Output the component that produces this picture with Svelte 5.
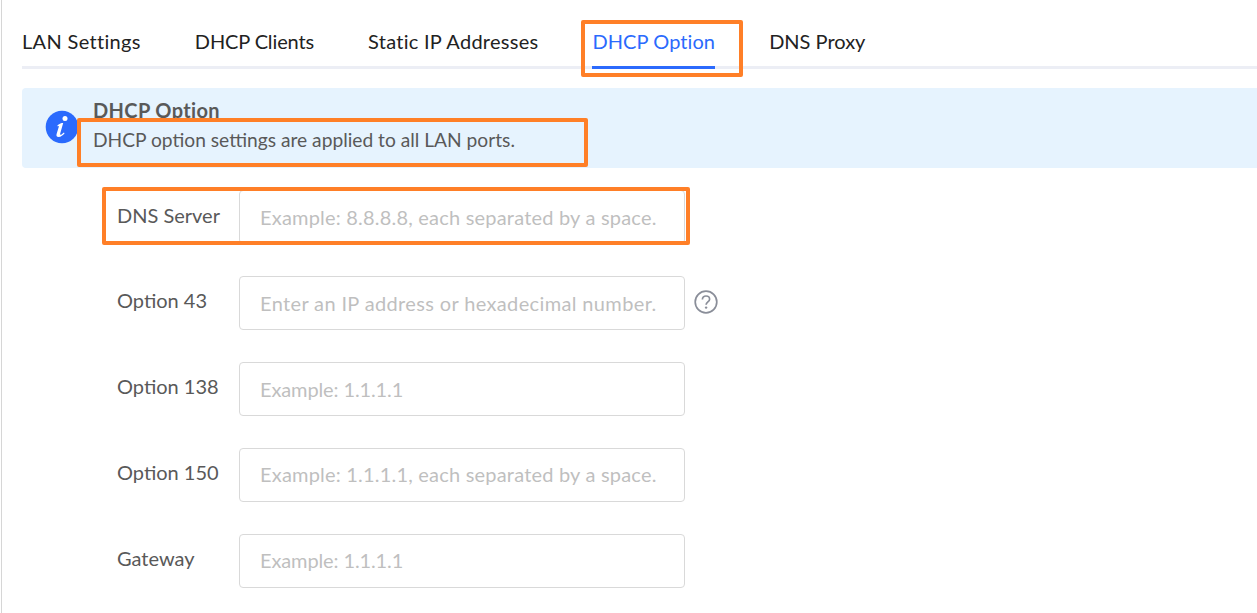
<script>
  const tabs = [
    { name: 'LAN Settings', spacing: 0.33 },
    { name: 'DHCP Clients', spacing: -0.12 },
    { name: 'Static IP Addresses', spacing: 0.27 },
    { name: 'DHCP Option', spacing: 0.08 },
    { name: 'DNS Proxy', spacing: 0 }
  ];
  const fields = [
    { label: 'DNS Server', placeholder: 'Example: 8.8.8.8, each separated by a space.', spacing: 0.2 },
    { label: 'Option 43', placeholder: 'Enter an IP address or hexadecimal number.', spacing: 0.36, help: true },
    { label: 'Option 138', placeholder: 'Example: 1.1.1.1', spacing: -0.12 },
    { label: 'Option 150', placeholder: 'Example: 1.1.1.1, each separated by a space.', spacing: 0.2 },
    { label: 'Gateway', placeholder: 'Example: 1.1.1.1', spacing: -0.12 }
  ];
</script>

<div class="page">
  <nav class="tabs">
    {#each tabs as tab}
      <div class="tab" class:active={tab.name === 'DHCP Option'} style="letter-spacing: {tab.spacing}px">{tab.name}</div>
    {/each}
  </nav>

  <div class="alert">
    <svg class="info" viewBox="0 0 34 34" width="34" height="34" aria-hidden="true">
      <circle cx="17" cy="17" r="16.3" fill="#2b6afd" />
      <circle cx="20" cy="8.6" r="2.5" fill="#fff" />
      <path d="M12.6 15.2c2-1.6 3.6-2.2 5.6-2.2l-3 10.4c-.3 1.2.5 1.5 1.3 1 .8-.4 1.6-1.1 2.4-1.9l.7.8c-1.700 2-3.600 3.700-6 3.700-1.900 0-2.500-1.200-2-3l2.200-7.200c.2-.8-.3-1-1.500-.3z" fill="#fff" />
    </svg>
    <div class="alert-text">
      <div class="alert-title">DHCP Option</div>
      <div class="alert-desc">DHCP option settings are applied to all LAN ports.</div>
    </div>
  </div>

  <form class="form">
    {#each fields as f}
      <div class="row">
        <label class="label" for={f.label}>{f.label}</label>
        <input id={f.label} class="input" placeholder={f.placeholder} style="letter-spacing: {f.spacing}px" />
        {#if f.help}
          <svg class="help" viewBox="0 0 24 24" width="24" height="24" aria-hidden="true">
            <circle cx="12" cy="12" r="10.8" fill="none" stroke="#8a8e99" stroke-width="1.7" />
            <path d="M8.400 9.500c0-2.100 1.500-3.500 3.600-3.500s3.600 1.300 3.600 3.200c0 2.700-3.500 2.800-3.500 5.600" fill="none" stroke="#8a8e99" stroke-width="1.700" />
            <circle cx="12.100" cy="17.600" r="1.200" fill="#8a8e99" />
          </svg>
        {/if}
      </div>
    {/each}
  </form>

  <div class="mark mark-tab"></div>
  <div class="mark mark-desc"></div>
  <div class="mark mark-dns"></div>
</div>

<style>
  :global(body) {
    margin: 0;
    background: #fff;
  }
  .page {
    position: relative;
    box-sizing: border-box;
    width: 1256px;
    height: 613px;
    margin-left: 1px;
    overflow: hidden;
    padding-left: 20px;
    border-left: 1px solid #d6d6d6;
    font-family: "Lato", "Noto Sans", sans-serif;
    font-size: 20px;
    color: #222;
  }
  .tabs {
    display: flex;
    gap: 54px;
    height: 69px;
    box-sizing: border-box;
    border-bottom: 3px solid #eceef5;
  }
  .tab {
    box-sizing: border-box;
    height: 69px;
    padding-top: 28px;
    line-height: 26px;
    white-space: nowrap;
  }
  .tab.active {
    color: #2b6afd;
    border-bottom: 3px solid #2b6afd;
  }
  .alert {
    display: flex;
    align-items: flex-start;
    gap: 14px;
    box-sizing: border-box;
    height: 80px;
    margin-top: 19px;
    padding: 22px 0 0 23px;
    background: #e6f3fe;
    border-radius: 4px 0 0 4px;
  }
  .info {
    flex: none;
  }
  .alert-text {
    margin-top: -12px;
    color: #595959;
  }
  .alert-title {
    font-weight: 700;
    line-height: 24px;
    letter-spacing: 0.36px;
  }
  .alert-desc {
    font-size: 19.2px;
    line-height: 36px;
  }
  .form {
    display: flex;
    flex-direction: column;
    gap: 32px;
    margin: 22px 0 0 95px;
  }
  .row {
    display: flex;
    align-items: center;
    height: 54px;
  }
  .label {
    width: 122px;
    flex: none;
    color: #595959;
    position: relative;
    top: -3px;
  }
  .row:first-child .label {
    top: -2px;
  }
  .input {
    box-sizing: border-box;
    width: 446px;
    height: 54px;
    padding: 0 20px;
    border: 1px solid #d9d9d9;
    border-radius: 4px;
    font-family: inherit;
    font-size: inherit;
    outline: none;
    background: #fff;
  }
  .row:nth-child(n + 4) .input {
    padding-bottom: 2px;
  }
  .input::placeholder {
    color: #bfbfbf;
    opacity: 1;
  }
  .help {
    margin-left: 9px;
    position: relative;
    top: -1px;
  }
  .mark {
    position: absolute;
    box-sizing: border-box;
    border: 4px solid #ff7f27;
    border-radius: 2px;
    pointer-events: none;
  }
  .mark-tab {
    left: 579px;
    top: 20px;
    width: 162px;
    height: 57px;
  }
  .mark-desc {
    left: 75px;
    top: 118px;
    width: 511px;
    height: 49px;
  }
  .mark-dns {
    left: 100px;
    top: 187px;
    width: 588px;
    height: 58px;
  }
</style>
